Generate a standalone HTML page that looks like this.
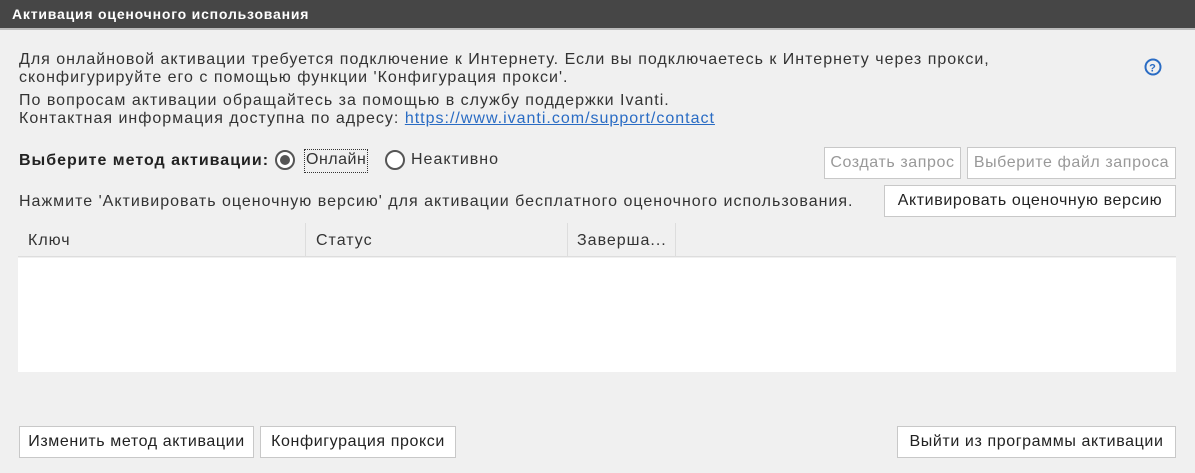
<!DOCTYPE html>
<html><head><meta charset="utf-8"><style>
*{margin:0;padding:0;box-sizing:border-box}
body{width:1195px;height:473px;background:#f0f0f0;font-family:"Liberation Sans",sans-serif;font-size:16px;letter-spacing:1px;color:#333;position:relative;overflow:hidden}
.hdr{position:absolute;left:0;top:0;width:1195px;height:30px;background:#464646;border-bottom:2px solid #bbb;color:#fff;font-weight:bold;font-size:14px;letter-spacing:0.8px;line-height:28px;padding-left:12px}
.t{position:absolute;left:19px;white-space:nowrap;line-height:18px}
.btn{position:absolute;background:#fff;border:1px solid #c8c8c8;height:32px;line-height:30px;text-align:center;white-space:nowrap;color:#222;letter-spacing:0.6px}
.dis{color:#999}
a{color:#2a6cc4}
.rad{position:absolute;width:20px;height:20px;border-radius:50%;border:2px solid #555;background:#fff}
</style></head><body>
<div class="hdr">Активация оценочного использования</div>
<div class="t" style="top:51px">Для онлайновой активации требуется подключение к Интернету. Если вы подключаетесь к Интернету через прокси,</div>
<div class="t" style="top:69px">сконфигурируйте его с помощью функции 'Конфигурация прокси'.</div>
<div class="t" style="top:92px">По вопросам активации обращайтесь за помощью в службу поддержки Ivanti.</div>
<div class="t" style="top:110px">Контактная информация доступна по адресу: <a href="#">https://www.ivanti.com/support/contact</a></div>
<svg style="position:absolute;left:1144px;top:58px" width="18" height="18" viewBox="0 0 18 18"><circle cx="9" cy="9" r="7.5" fill="none" stroke="#2a6cc4" stroke-width="2"/><text x="9" y="13.5" font-size="11" font-weight="bold" text-anchor="middle" fill="#2a6cc4" font-family="Liberation Sans">?</text></svg>
<div class="t" style="top:152px;font-weight:bold;color:#222">Выберите метод активации:</div>
<div class="rad" style="left:275px;top:150px"><div style="position:absolute;left:3px;top:3px;width:10px;height:10px;border-radius:50%;background:#555"></div></div>
<div style="position:absolute;left:304px;top:149px;height:24px;border:1px dotted #333;padding:0 1px;line-height:20px;letter-spacing:0.5px">Онлайн</div>
<div class="rad" style="left:385px;top:150px"></div>
<div class="t" style="left:411px;top:151px">Неактивно</div>
<div class="btn dis" style="left:824px;top:147px;width:137px">Создать запрос</div>
<div class="btn dis" style="left:967px;top:147px;width:209px">Выберите файл запроса</div>
<div class="t" style="top:193px">Нажмите 'Активировать оценочную версию' для активации бесплатного оценочного использования.</div>
<div class="btn" style="left:884px;top:185px;width:292px">Активировать оценочную версию</div>
<div style="position:absolute;left:18px;top:223px;width:1158px;height:34px;border-bottom:1px solid #ddd"></div>
<div style="position:absolute;left:305px;top:223px;width:1px;height:34px;background:#ddd"></div>
<div style="position:absolute;left:567px;top:223px;width:1px;height:34px;background:#ddd"></div>
<div style="position:absolute;left:675px;top:223px;width:1px;height:34px;background:#ddd"></div>
<div class="t" style="left:28px;top:232px">Ключ</div>
<div class="t" style="left:316px;top:232px">Статус</div>
<div class="t" style="left:577px;top:232px">Заверша...</div>
<div style="position:absolute;left:18px;top:258px;width:1158px;height:114px;background:#fff"></div>
<div class="btn" style="left:19px;top:426px;width:235px">Изменить метод активации</div>
<div class="btn" style="left:260px;top:426px;width:196px">Конфигурация прокси</div>
<div class="btn" style="left:897px;top:426px;width:279px">Выйти из программы активации</div>
</body></html>
